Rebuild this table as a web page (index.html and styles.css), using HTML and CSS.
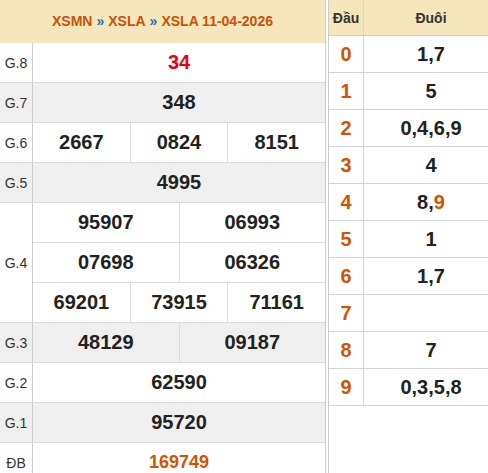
FILE: index.html
```html
<!DOCTYPE html>
<html lang="vi">
<head>
<meta charset="utf-8">
<title>XSLA 11-04-2026</title>
<link rel="stylesheet" href="styles.css">
</head>
<body>
<div class="wrap">
  <div class="kq">
    <div class="kq-head">
      <span class="crumb">XSMN</span><span class="sep">»</span><span class="crumb">XSLA</span><span class="sep">»</span><span class="crumb">XSLA 11-04-2026</span>
    </div>
    <div class="row">
      <div class="lbl">G.8</div>
      <div class="vals"><div class="v red">34</div></div>
    </div>
    <div class="row alt">
      <div class="lbl">G.7</div>
      <div class="vals"><div class="v">348</div></div>
    </div>
    <div class="row">
      <div class="lbl">G.6</div>
      <div class="vals"><div class="v">2667</div><div class="v">0824</div><div class="v">8151</div></div>
    </div>
    <div class="row alt">
      <div class="lbl">G.5</div>
      <div class="vals"><div class="v">4995</div></div>
    </div>
    <div class="row tall">
      <div class="lbl">G.4</div>
      <div class="stack">
        <div class="vals sub"><div class="v">95907</div><div class="v">06993</div></div>
        <div class="vals sub"><div class="v">07698</div><div class="v">06326</div></div>
        <div class="vals sub last"><div class="v">69201</div><div class="v">73915</div><div class="v">71161</div></div>
      </div>
    </div>
    <div class="row alt">
      <div class="lbl">G.3</div>
      <div class="vals"><div class="v">48129</div><div class="v">09187</div></div>
    </div>
    <div class="row">
      <div class="lbl">G.2</div>
      <div class="vals"><div class="v">62590</div></div>
    </div>
    <div class="row alt">
      <div class="lbl">G.1</div>
      <div class="vals"><div class="v">95720</div></div>
    </div>
    <div class="row">
      <div class="lbl">ĐB</div>
      <div class="vals"><div class="v db">169749</div></div>
    </div>
  </div>

  <div class="dt">
    <div class="dt-row dt-head"><div class="d">Đầu</div><div class="t">Đuôi</div></div>
    <div class="dt-row"><div class="d">0</div><div class="t">1,7</div></div>
    <div class="dt-row"><div class="d">1</div><div class="t">5</div></div>
    <div class="dt-row"><div class="d">2</div><div class="t">0,4,6,9</div></div>
    <div class="dt-row"><div class="d">3</div><div class="t">4</div></div>
    <div class="dt-row"><div class="d">4</div><div class="t">8,<span class="hl">9</span></div></div>
    <div class="dt-row"><div class="d">5</div><div class="t">1</div></div>
    <div class="dt-row"><div class="d">6</div><div class="t">1,7</div></div>
    <div class="dt-row"><div class="d">7</div><div class="t"></div></div>
    <div class="dt-row"><div class="d">8</div><div class="t">7</div></div>
    <div class="dt-row"><div class="d">9</div><div class="t">0,3,5,8</div></div>
  </div>
</div>
</body>
</html>
```

FILE: styles.css
```css
* { box-sizing: border-box; }
html, body { margin: 0; padding: 0; background: #fff; }
body {
  font-family: "Liberation Sans", Arial, sans-serif;
  color: #222;
  overflow: hidden;
}
.wrap {
  display: flex;
  gap: 2px;
  width: 488px;
  height: 473px;
  overflow: hidden;
}

/* left results table */
.kq {
  flex: none;
  width: 326px;
  border-right: 1px solid #ccc;
}
.kq-head {
  height: 43px;
  padding-bottom: 2px;
  background: #f5e6bc;
  display: flex;
  align-items: center;
  justify-content: center;
  font-size: 14px;
  font-weight: bold;
  color: #c95207;
}
.sep {
  color: #1e72c0;
  margin: 0 4px;
}
.row {
  display: flex;
  height: 40px;
  border-bottom: 1px solid #ddd;
  background: #fff;
}
.row.alt { background: #efefef; }
.row.tall { height: 120px; }
.lbl {
  flex: none;
  width: 33px;
  border-right: 1px solid #ccc;
  display: flex;
  align-items: center;
  justify-content: center;
  font-size: 14px;
  color: #333;
}
.vals {
  flex: 1;
  display: flex;
}
.stack {
  flex: 1;
  display: flex;
  flex-direction: column;
}
.vals.sub {
  flex: none;
  height: 40px;
  border-bottom: 1px solid #ddd;
}
.vals.sub.last {
  height: 39px;
  border-bottom: none;
}
.v {
  flex: 1;
  display: flex;
  align-items: center;
  justify-content: center;
  font-size: 20px;
  font-weight: bold;
  color: #222;
}
.v + .v { border-left: 1px solid #ddd; }
.v.red { color: #e8000b; }
.v.db { color: #d35400; font-size: 18px; }

/* right head/tail table */
.dt {
  flex: none;
  width: 170px;
  border-left: 1px solid #ccc;
}
.dt-row {
  display: flex;
  height: 37px;
  border-bottom: 1px solid #d5d5d5;
}
.dt-head {
  height: 36px;
  background: #f5e6bc;
  border-bottom-color: #ccc;
}
.d {
  flex: none;
  width: 35px;
  border-right: 1px solid #d5d5d5;
  display: flex;
  align-items: center;
  justify-content: center;
  font-size: 20px;
  font-weight: bold;
  color: #d35400;
}
.t {
  flex: 1;
  display: flex;
  align-items: center;
  justify-content: center;
  font-size: 20px;
  font-weight: bold;
  color: #222;
}
.dt-head .d, .dt-head .t {
  font-size: 14px;
  color: #333;
}
.hl { color: #d35400; }
```
